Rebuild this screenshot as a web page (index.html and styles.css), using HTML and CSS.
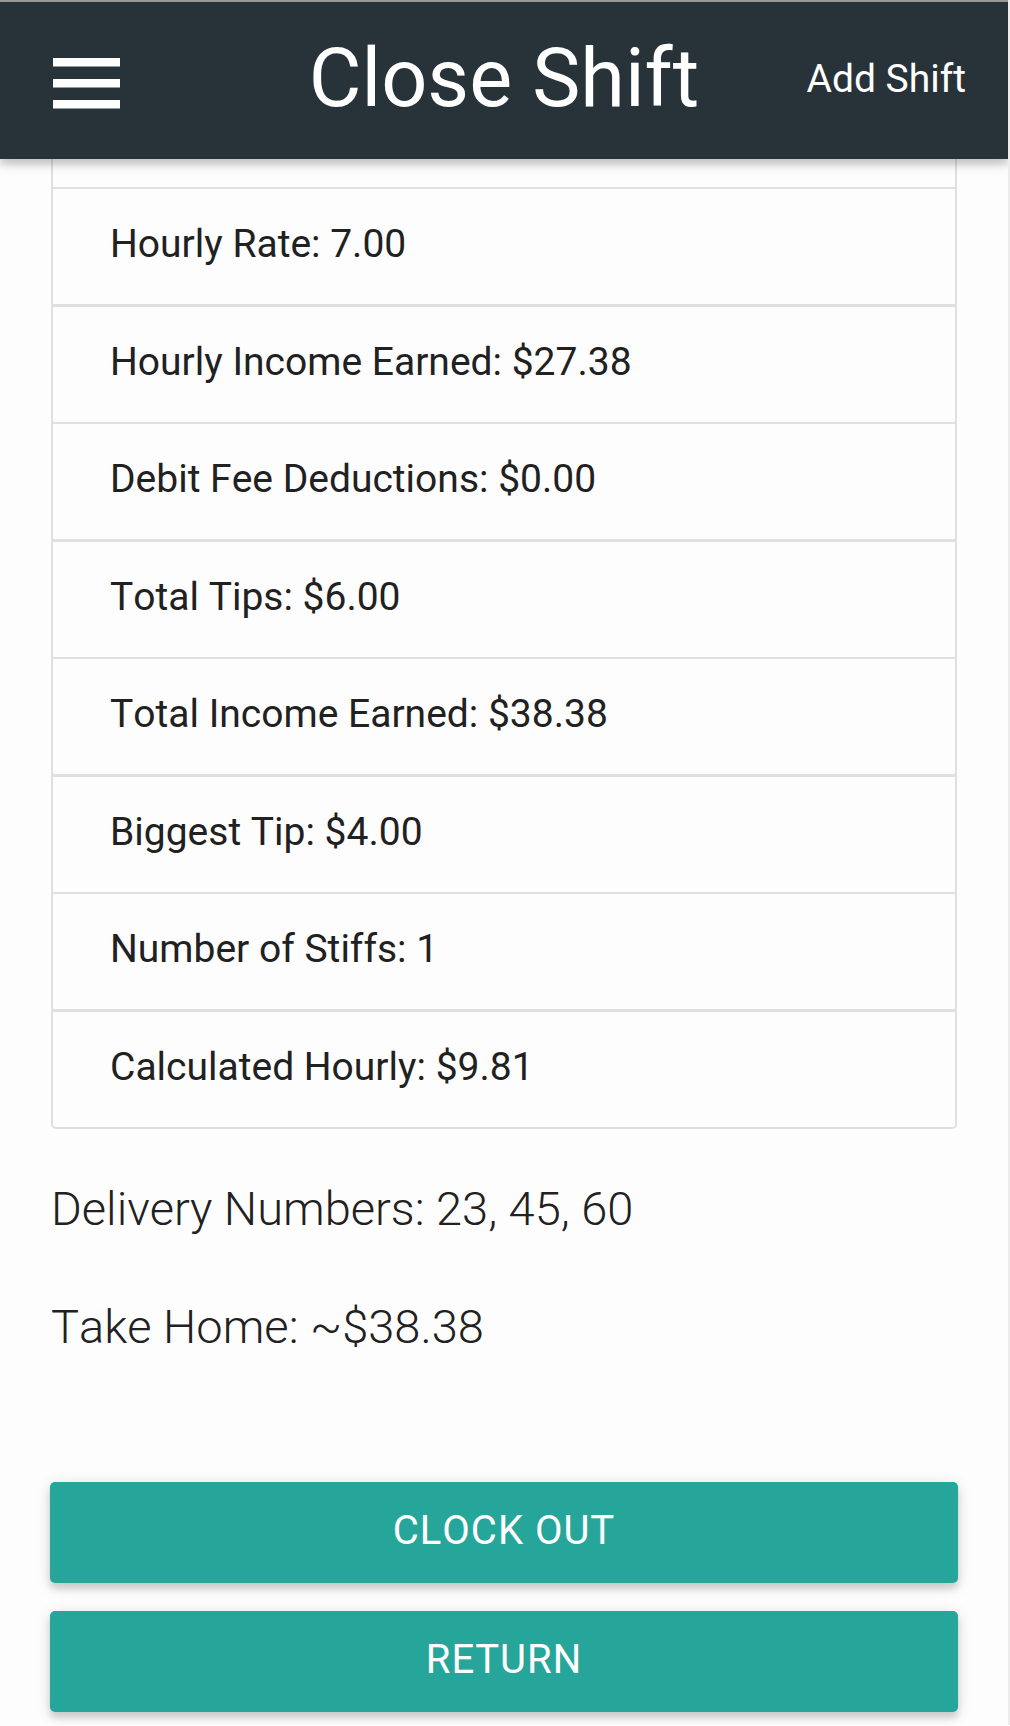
FILE: index.html
```html
<!DOCTYPE html>
<html lang="en">
<head>
<meta charset="utf-8">
<meta name="viewport" content="width=device-width, initial-scale=1">
<title>Close Shift</title>
<link rel="stylesheet" href="styles.css">
</head>
<body>
<header class="navbar">
  <button class="menu" type="button" aria-label="Menu">
    <svg viewBox="0 0 67 51" width="67" height="51" aria-hidden="true"><path fill="#fff" d="M0 0h67v8.400H0zM0 21h67v8.400H0zM0 42h67v8.400H0z"/></svg>
  </button>
  <h1 class="title">Close Shift</h1>
  <a class="add" href="#">Add Shift</a>
</header>
<main class="content">
  <ul class="collection">
    <li class="item">Hourly Rate: 7.00</li>
    <li class="item">Hourly Income Earned: $27.38</li>
    <li class="item">Debit Fee Deductions: $0.00</li>
    <li class="item">Total Tips: $6.00</li>
    <li class="item">Total Income Earned: $38.38</li>
    <li class="item">Biggest Tip: $4.00</li>
    <li class="item">Number of Stiffs: 1</li>
    <li class="item">Calculated Hourly: $9.81</li>
  </ul>
  <p class="summary">Delivery Numbers: 23, 45, 60</p>
  <p class="summary">Take Home: ~$38.38</p>
  <div class="actions">
    <button class="btn" type="button">CLOCK OUT</button>
    <button class="btn" type="button">RETURN</button>
  </div>
</main>
</body>
</html>
```
FILE: styles.css
```css
* { box-sizing: border-box; }
body {
  margin: 0;
  background: #fefdfe;
  color: #212121;
  font-family: Roboto, "Liberation Sans", sans-serif;
  font-kerning: none;
  border-right: 2px solid #ececec;
}
.navbar {
  position: relative;
  display: grid;
  grid-template-columns: 1fr auto 1fr;
  align-items: center;
  height: 159px;
  padding: 0 42px;
  border-top: 2px solid #999;
  background: #283239;
  color: #fff;
  box-shadow: 0 6px 6px rgba(0, 0, 0, 0.12), 0 3px 15px rgba(0, 0, 0, 0.16);
}
.menu {
  display: flex;
  justify-self: start;
  margin: 6px 0 0 11px;
  padding: 0;
  border: 0;
  background: none;
}
.title {
  margin: 0;
  padding-bottom: 4px;
  font-size: 81px;
  font-weight: 400;
  line-height: 120px;
}
.add {
  justify-self: end;
  padding-bottom: 4px;
  color: inherit;
  font-size: 39px;
  text-decoration: none;
}
.content { padding: 0 50px 13px; }
.collection {
  margin: 0 1px;
  padding: 28px 0 0;
  border: 2px solid #e0dfe2;
  border-top: 0;
  border-radius: 0 0 5px 5px;
  list-style: none;
}
.item {
  padding: 25px 57px 30px;
  border-top: 2px solid #e0dfe2;
  font-size: 39px;
  line-height: 60px;
}
.item:nth-child(even) { border-top-width: 3px; }
.summary {
  margin: 48px 1px 0;
  font-size: 47px;
  font-weight: 300;
  line-height: 64px;
}
.summary + .summary { margin-top: 54px; }
.actions {
  display: grid;
  gap: 28px;
  margin-top: 123px;
}
.btn {
  height: 101px;
  padding: 0 0 4px;
  border: 0;
  border-radius: 5px;
  background: #26a69a;
  color: #fff;
  font: 400 40px Roboto, "Liberation Sans", sans-serif;
  font-kerning: none;
  letter-spacing: 1px;
  box-shadow: 0 6px 6px rgba(0, 0, 0, 0.12), 0 3px 15px rgba(0, 0, 0, 0.14);
}
```
